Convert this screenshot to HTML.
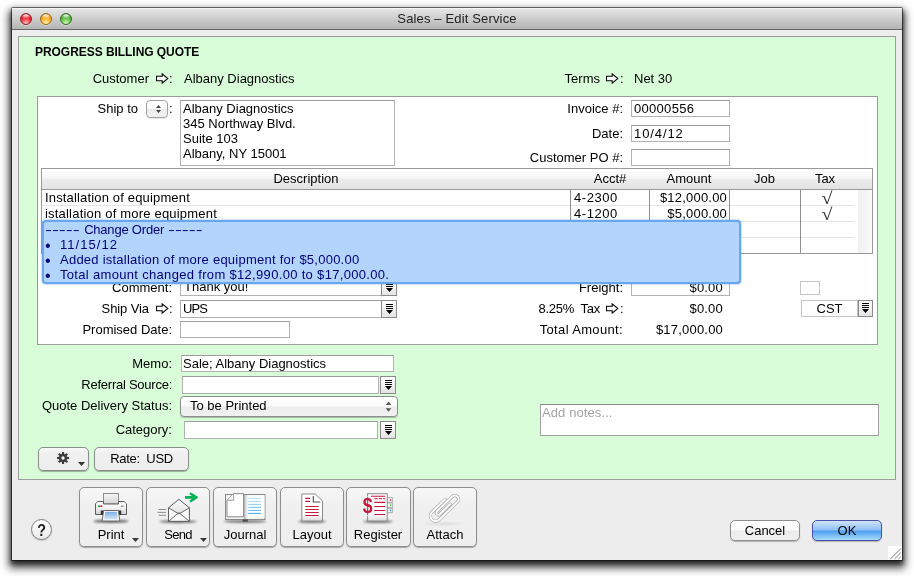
<!DOCTYPE html>
<html>
<head>
<meta charset="utf-8">
<title>Sales – Edit Service</title>
<style>
html,body{margin:0;padding:0;}
body{width:914px;height:576px;background:#fff;position:relative;overflow:hidden;
 font-family:"Liberation Sans",sans-serif;font-size:13px;color:#000;}
.abs,#win *{position:absolute;box-sizing:border-box;}
#win{position:absolute;left:11px;top:7px;width:892px;height:553px;will-change:transform;}
#frame{left:1px;top:1px;width:890px;height:552px;background:#ededed;border-radius:1px 1px 0 0;
 box-shadow:0 0 0 1px rgba(0,0,0,.5),0 5px 8px 3px rgba(0,0,0,.7),0 3px 4px 1px rgba(0,0,0,.5);}
#tbar{left:1px;top:1px;width:890px;height:22px;border-radius:1px 1px 0 0;
 background:linear-gradient(#e8e8e8,#d0d0d0 45%,#b4b4b4);border-bottom:1px solid #666;
 box-shadow:inset 0 1px 0 #f6f6f6;}
#ttl{left:0;top:3px;width:892px;text-align:center;line-height:16px;color:#222;letter-spacing:.15px;}
.tl{width:12px;height:12px;border-radius:50%;top:6px;box-shadow:0 1px 0 rgba(255,255,255,.45);}
.t{line-height:16px;white-space:nowrap;margin-top:1px;}
.ar{width:13px;height:12px;}
.pp{color:#00007a;}
.ck{font-family:'Liberation Serif',serif;font-size:17px;line-height:20px;width:20px;text-align:center;color:#2a2a2a;transform:scaleX(1.18);}
#win span{position:static;}
#win svg *{position:static;}
#win .ds{display:inline-block;width:35.5px;transform:scaleX(1.6);transform-origin:0 50%;}
.r{text-align:right;}
.fld{background:#fff;border:1px solid #b2b2b2;border-top-color:#9c9c9c;}
.dd{width:16px;background:linear-gradient(#fff,#e4e4e4);border:1px solid #8a8a8a;}
#green{left:7px;top:29px;width:878px;height:444px;background:#d8fdd8;border:1px solid #9c9c9c;}
#white{left:26px;top:89px;width:841px;height:249px;background:#fff;border:1px solid #9a9a9a;}
.btn{background:linear-gradient(#fff,#fafafa 48%,#ececec 52%,#f1f1f1);border:1px solid #8d8d8d;border-radius:4px;
 box-shadow:0 1px 1px rgba(0,0,0,.25);}
.gbtn{background:linear-gradient(#f8f8f8,#f0f0f0 25%,#eeeeee);border:1px solid #8c8f8c;border-radius:5px;box-shadow:0 1px 1px rgba(0,0,0,.3);}
.tb{width:64px;height:60px;top:480px;background:linear-gradient(#f7f7f7,#f0f0f0 30%,#eeeeee);border:1px solid #8e8e8e;border-radius:5px;
 box-shadow:0 1px 1px rgba(0,0,0,.3);}
.tb .t{left:0;width:62px;text-align:center;top:38px;}
</style>
</head>
<body>
<div id="win">
 <div id="frame"></div>
 <div id="tbar"></div>
 <div class="tl" style="left:9px;background:radial-gradient(ellipse 55% 30% at 50% 14%,rgba(255,255,255,.95),rgba(255,255,255,0)),radial-gradient(circle at 50% 92%,#ffc4c4 0%,#fa3a46 45%,#d81a2a 75%,#9c1420 100%);border:1px solid #8e1f26"></div>
 <div class="tl" style="left:29px;background:radial-gradient(ellipse 55% 30% at 50% 14%,rgba(255,255,255,.95),rgba(255,255,255,0)),radial-gradient(circle at 50% 92%,#fff2b0 0%,#fdb838 45%,#ee9410 75%,#b06a08 100%);border:1px solid #9a6410"></div>
 <div class="tl" style="left:49px;background:radial-gradient(ellipse 55% 30% at 50% 14%,rgba(255,255,255,.95),rgba(255,255,255,0)),radial-gradient(circle at 50% 92%,#d4f8b8 0%,#6cc850 45%,#3fa52c 75%,#257018 100%);border:1px solid #2f6a22"></div>
 <div id="ttl" class="t">Sales – Edit Service</div>

 <div id="green"></div>
 <div class="t" style="left:24px;top:36px;font-weight:bold;font-size:12px;letter-spacing:-.05px">PROGRESS BILLING QUOTE</div>
 <div class="t r" style="left:50px;width:88px;top:63px">Customer</div>
 <svg class="ar" style="left:145px;top:66px" viewBox="0 0 13 12"><path d="M0.5 3.2H6.2V0.9L11.8 5.5L6.2 10.1V7.8H0.5Z" fill="#fff" stroke="#000" stroke-width="1.1" stroke-linejoin="miter"/></svg>
 <div class="t" style="left:158px;top:63px">:</div>
 <div class="t" style="left:173px;top:63px">Albany Diagnostics</div>
 <div class="t r" style="left:520px;width:69px;top:63px">Terms</div>
 <svg class="ar" style="left:595px;top:66px" viewBox="0 0 13 12"><path d="M0.5 3.2H6.2V0.9L11.8 5.5L6.2 10.1V7.8H0.5Z" fill="#fff" stroke="#000" stroke-width="1.1" stroke-linejoin="miter"/></svg>
 <div class="t" style="left:609px;top:63px">:</div>
 <div class="t" style="left:623px;top:63px">Net 30</div>

 <div id="white"></div>
 <!-- ship to -->
 <div class="t r" style="left:60px;width:67px;top:93px">Ship to</div>
 <div class="btn" style="left:135px;top:93px;width:22px;height:18px;border-radius:4px;border-color:#a2a2a2;box-shadow:0 1px 0 rgba(0,0,0,.08)"></div>
 <svg style="left:144px;top:97px;width:7px;height:10px" viewBox="0 0 7 10"><path d="M1 3.9L3.5 .9L6 3.9ZM1 6.1L3.5 9.1L6 6.1Z" fill="#444"/></svg>
 <div class="t" style="left:158px;top:93px">:</div>
 <div class="fld" style="left:169px;top:93px;width:215px;height:66px"></div>
 <div class="t" style="left:172px;top:93px;line-height:15px">Albany Diagnostics<br>345 Northway Blvd.<br>Suite 103<br>Albany, NY 15001</div>

 <div class="t r" style="left:500px;width:112px;top:93px">Invoice #:</div>
 <div class="fld" style="left:620px;top:93px;width:99px;height:17px"></div>
 <div class="t" style="left:623px;top:93px;letter-spacing:.3px">00000556</div>
 <div class="t r" style="left:500px;width:112px;top:118px">Date:</div>
 <div class="fld" style="left:620px;top:118px;width:99px;height:17px"></div>
 <div class="t" style="left:623px;top:118px;letter-spacing:.9px">10/4/12</div>
 <div class="t r" style="left:500px;width:112px;top:142px">Customer PO #:</div>
 <div class="fld" style="left:620px;top:142px;width:99px;height:17px"></div>

 <!-- table -->
 <div id="tbl" style="left:30px;top:161px;width:832px;height:86px;background:#fff;border:1px solid #9a9a9a"></div>
 <div style="left:31px;top:162px;width:830px;height:21px;background:linear-gradient(#fff,#f6f6f6 45%,#ececec 52%,#e3e3e3);border-bottom:1px solid #9a9a9a"></div>
 <div class="t" style="left:31px;width:528px;text-align:center;top:163px">Description</div>
 <div class="t" style="left:560px;width:78px;text-align:center;top:163px">Acct#</div>
 <div class="t" style="left:638px;width:80px;text-align:center;top:163px">Amount</div>
 <div class="t" style="left:718px;width:71px;text-align:center;top:163px">Job</div>
 <div class="t" style="left:789px;width:50px;text-align:center;top:163px">Tax</div>
 <!-- row lines -->
 <div style="left:31px;top:198px;width:812px;height:1px;background:#e4e4e4"></div>
 <div style="left:31px;top:214px;width:812px;height:1px;background:#e4e4e4"></div>
 <div style="left:31px;top:230px;width:812px;height:1px;background:#e4e4e4"></div>
 <!-- col lines -->
 <div style="left:559px;top:183px;width:1px;height:63px;background:#8f8f8f"></div>
 <div style="left:638px;top:183px;width:1px;height:63px;background:#8f8f8f"></div>
 <div style="left:718px;top:183px;width:1px;height:63px;background:#8f8f8f"></div>
 <div style="left:789px;top:183px;width:1px;height:63px;background:#8f8f8f"></div>
 <div style="left:847px;top:183px;width:14px;height:63px;background:linear-gradient(90deg,#f0f0f0,#fafafa)"></div>
 <div class="t" style="left:34px;top:182px;letter-spacing:.16px">Installation of equipment</div>
 <div class="t" style="left:34px;top:198px;letter-spacing:.2px">istallation of more equipment</div>
 <div class="t" style="left:563px;top:182px;letter-spacing:.55px">4-2300</div>
 <div class="t" style="left:563px;top:198px;letter-spacing:.55px">4-1200</div>
 <div class="t r" style="left:640px;width:76px;top:182px;letter-spacing:.2px">$12,000.00</div>
 <div class="t r" style="left:640px;width:76px;top:198px;letter-spacing:.2px">$5,000.00</div>
 <div class="t ck" style="left:806px;top:181px">√</div>
 <div class="t ck" style="left:806px;top:197px">√</div>

 <!-- below table, left -->
 <div class="t r" style="left:40px;width:121px;top:272px">Comment:</div>
 <div class="fld" style="left:169px;top:272px;width:202px;height:17px"></div>
 <div class="t" style="left:173px;top:271px">Thank you!</div>
 <div class="dd" style="left:370px;top:272px;height:17px"><svg style="left:4px;top:2px;width:7px;height:10px" viewBox="0 0 7 10"><path d="M0 0h7v1H0zM0 2h7v1H0zM0 4h7v1H0zM0 6h7L3.5 10z" fill="#000"/></svg></div>
 <div class="t r" style="left:60px;width:78px;top:293px;letter-spacing:-.1px">Ship Via</div>
 <svg class="ar" style="left:145px;top:296px" viewBox="0 0 13 12"><path d="M0.5 3.2H6.2V0.9L11.8 5.5L6.2 10.1V7.8H0.5Z" fill="#fff" stroke="#000" stroke-width="1.1" stroke-linejoin="miter"/></svg>
 <div class="t" style="left:158px;top:293px">:</div>
 <div class="fld" style="left:169px;top:293px;width:202px;height:18px"></div>
 <div class="t" style="left:172px;top:293px;letter-spacing:-.9px">UPS</div>
 <div class="dd" style="left:370px;top:293px;height:18px"><svg style="left:4px;top:3px;width:7px;height:10px" viewBox="0 0 7 10"><path d="M0 0h7v1H0zM0 2h7v1H0zM0 4h7v1H0zM0 6h7L3.5 10z" fill="#000"/></svg></div>
 <div class="t r" style="left:40px;width:121px;top:314px">Promised Date:</div>
 <div class="fld" style="left:169px;top:314px;width:110px;height:17px"></div>

 <!-- below table, right -->
 <div class="t r" style="left:500px;width:112px;top:272px">Freight:</div>
 <div class="fld" style="left:620px;top:272px;width:99px;height:17px"></div>
 <div class="t r" style="left:636px;width:76px;top:272px;letter-spacing:.2px">$0.00</div>
 <div class="fld" style="left:789px;top:274px;width:20px;height:14px;border-color:#c4c4c4"></div>
 <div class="t r" style="left:500px;width:89px;top:293px;letter-spacing:-.25px">8.25%&nbsp; Tax</div>
 <svg class="ar" style="left:595px;top:296px" viewBox="0 0 13 12"><path d="M0.5 3.2H6.2V0.9L11.8 5.5L6.2 10.1V7.8H0.5Z" fill="#fff" stroke="#000" stroke-width="1.1" stroke-linejoin="miter"/></svg>
 <div class="t" style="left:609px;top:293px">:</div>
 <div class="t r" style="left:636px;width:76px;top:293px;letter-spacing:.2px">$0.00</div>
 <div class="fld" style="left:790px;top:293px;width:57px;height:17px;border-color:#c4c4c4"></div>
 <div class="t" style="left:790px;width:57px;text-align:center;top:293px">CST</div>
 <div class="dd" style="left:847px;top:293px;height:17px;width:15px"><svg style="left:3px;top:2px;width:7px;height:10px" viewBox="0 0 7 10"><path d="M0 0h7v1H0zM0 2h7v1H0zM0 4h7v1H0zM0 6h7L3.5 10z" fill="#000"/></svg></div>
 <div class="t r" style="left:480px;width:132px;top:314px;letter-spacing:.35px">Total Amount:</div>
 <div class="t r" style="left:620px;width:92px;top:314px;letter-spacing:.2px">$17,000.00</div>

 <!-- popup -->
 <div style="left:31px;top:213px;width:699px;height:64px;background:#b3d5fd;border:2px solid #69a6ec;border-radius:4px;box-shadow:0 0 2px rgba(80,150,230,.9)"></div>
 <div class="t pp" style="left:34px;top:214px"><span class="ds">-----</span>&nbsp;<span style="letter-spacing:-.2px">Change Order</span>&nbsp;<span class="ds">-----</span></div>
 <div class="t pp" style="left:34px;top:230px;font-size:16px">•</div><div class="t pp" style="left:49px;top:229px;letter-spacing:1.04px">11/15/12</div>
 <div class="t pp" style="left:34px;top:245px;font-size:16px">•</div><div class="t pp" style="left:49px;top:244px;letter-spacing:.24px">Added istallation of more equipment for $5,000.00</div>
 <div class="t pp" style="left:34px;top:260px;font-size:16px">•</div><div class="t pp" style="left:49px;top:259px;letter-spacing:.32px">Total amount changed from $12,990.00 to $17,000.00.</div>

 <!-- lower form -->
 <div class="t r" style="left:40px;width:121px;top:348px">Memo:</div>
 <div class="fld" style="left:170px;top:348px;width:213px;height:17px"></div>
 <div class="t" style="left:172px;top:348px">Sale; Albany Diagnostics</div>
 <div class="t r" style="left:40px;width:121px;top:369px;letter-spacing:-.25px">Referral Source:</div>
 <div class="fld" style="left:171px;top:369px;width:197px;height:18px"></div>
 <div class="dd" style="left:369px;top:369px;height:18px"><svg style="left:4px;top:3px;width:7px;height:10px" viewBox="0 0 7 10"><path d="M0 0h7v1H0zM0 2h7v1H0zM0 4h7v1H0zM0 6h7L3.5 10z" fill="#000"/></svg></div>
 <div class="t r" style="left:20px;width:141px;top:390px">Quote Delivery Status:</div>
 <div class="btn" style="left:169px;top:389px;width:218px;height:21px"></div>
 <div class="t" style="left:179px;top:390px">To be Printed</div>
 <svg style="left:374px;top:394px;width:7px;height:11px" viewBox="0 0 7 11"><path d="M.7 4L3.5 .5L6.3 4ZM.7 7.2L3.5 10.7L6.3 7.2Z" fill="#555"/></svg>
 <div class="t r" style="left:40px;width:121px;top:414px">Category:</div>
 <div class="fld" style="left:173px;top:414px;width:194px;height:18px"></div>
 <div class="dd" style="left:369px;top:414px;height:18px"><svg style="left:4px;top:3px;width:7px;height:10px" viewBox="0 0 7 10"><path d="M0 0h7v1H0zM0 2h7v1H0zM0 4h7v1H0zM0 6h7L3.5 10z" fill="#000"/></svg></div>

 <div class="gbtn" style="left:27px;top:440px;width:51px;height:24px"></div>
 <svg style="left:46px;top:445px;width:12px;height:12px" viewBox="-6 -6 12 12"><g fill="#3c3c3c"><circle r="4"/><rect x="-1.1" y="-6" width="2.2" height="12"/><rect x="-1.1" y="-6" width="2.2" height="12" transform="rotate(45)"/><rect x="-1.1" y="-6" width="2.2" height="12" transform="rotate(90)"/><rect x="-1.1" y="-6" width="2.2" height="12" transform="rotate(135)"/></g><circle r="1.7" fill="#f6f6f6"/></svg>
 <svg style="left:67px;top:455px;width:7px;height:4px" viewBox="0 0 7 4"><path d="M0 0H7L3.5 4Z" fill="#333"/></svg>
 <div class="gbtn" style="left:83px;top:440px;width:95px;height:24px"></div>
 <div class="t" style="left:83px;width:95px;text-align:center;top:443px;letter-spacing:-.3px">Rate:&nbsp; USD</div>

 <div class="fld" style="left:529px;top:397px;width:339px;height:32px;border-color:#a0a0a0;border-top-color:#8c8c8c"></div>
 <div class="t" style="left:531px;top:397px;color:#a3a3a3;letter-spacing:.1px">Add notes...</div>

 <!-- bottom bar -->
 <div style="left:20px;top:512px;width:21px;height:21px;border-radius:50%;background:linear-gradient(#fff,#ececec);border:1px solid #7d7d7d;box-shadow:0 1px 1px rgba(0,0,0,.2)"></div>
 <div class="t" style="left:20px;width:21px;text-align:center;top:515px;font-weight:bold;font-size:17px;transform:scaleX(.84);color:#222">?</div>

 <div class="tb" style="left:68px"><div class="t" style="left:0px">Print</div><svg style="left:52px;top:50px;width:7px;height:4px" viewBox="0 0 7 4"><path d="M0 0H7L3.5 4Z" fill="#3a3a3a"/></svg></div>
 <div class="tb" style="left:135px"><div class="t" style="left:0px;letter-spacing:-.7px">Send</div><svg style="left:53px;top:50px;width:7px;height:4px" viewBox="0 0 7 4"><path d="M0 0H7L3.5 4Z" fill="#3a3a3a"/></svg></div>
 <div class="tb" style="left:202px"><div class="t">Journal</div></div>
 <div class="tb" style="left:269px"><div class="t">Layout</div></div>
 <div class="tb" style="left:335px;width:65px"><div class="t">Register</div></div>
 <div class="tb" style="left:402px"><div class="t">Attach</div></div>

 <svg id="icons" style="left:0;top:0;width:892px;height:553px" viewBox="11 7 892 553">
  <defs>
   <linearGradient id="gPap" x1="0" y1="0" x2="0" y2="1"><stop offset="0" stop-color="#f6f6f6"/><stop offset="1" stop-color="#d4d4d4"/></linearGradient>
   <linearGradient id="gBody" x1="0" y1="0" x2="0" y2="1"><stop offset="0" stop-color="#ffffff"/><stop offset=".45" stop-color="#f4f4f4"/><stop offset="1" stop-color="#cfcfcf"/></linearGradient>
   <linearGradient id="gBlue" x1="0" y1="0" x2="0" y2="1"><stop offset="0" stop-color="#7aaee6"/><stop offset="1" stop-color="#d6e8fa"/></linearGradient>
   <linearGradient id="gDoc" x1="0" y1="0" x2="0" y2="1"><stop offset="0" stop-color="#ffffff"/><stop offset=".75" stop-color="#ffffff"/><stop offset="1" stop-color="#d9d9d9"/></linearGradient>
   <linearGradient id="gFlap" x1="0" y1="0" x2="0" y2="1"><stop offset="0" stop-color="#ffffff"/><stop offset="1" stop-color="#cfcfcf"/></linearGradient>
   <linearGradient id="gSpine" x1="0" y1="0" x2="1" y2="0"><stop offset="0" stop-color="#ffffff"/><stop offset=".8" stop-color="#d0d0d0"/><stop offset="1" stop-color="#9a9a9a"/></linearGradient>
   <filter id="blur1" x="-20%" y="-200%" width="140%" height="500%"><feGaussianBlur stdDeviation="1.1"/></filter>
  </defs>

  <!-- PRINT -->
  <ellipse cx="111" cy="521.3" rx="17.5" ry="1.7" fill="#000" opacity=".55" filter="url(#blur1)"/>
  <rect x="103.5" y="493.5" width="15" height="10.5" fill="url(#gPap)" stroke="#8c8c8c"/>
  <path d="M95.5 503.8L97.8 501.5H103.5V504H118.5V501.5H124.2L126.5 503.8V514.5H95.5Z" fill="url(#gBody)" stroke="#5c5c5c"/>
  <rect x="98" y="505.3" width="2" height="1.7" fill="#22a83a"/><rect x="100.3" y="505.3" width="2" height="1.7" fill="#e0242a"/>
  <rect x="121" y="505.5" width="2.8" height="1.4" fill="#9a9a9a"/>
  <rect x="100.8" y="510.5" width="20.4" height="4.5" fill="#2e2e2e"/>
  <path d="M103.6 510.5H118.4L119.8 521H102.2Z" fill="#fdfdfd" stroke="#6a6a6a"/>
  <path d="M105.2 511.8H116.8L117.9 519.4H104.1Z" fill="url(#gBlue)"/>

  <!-- SEND -->
  <ellipse cx="178" cy="521.6" rx="19" ry="1.6" fill="#000" opacity=".5" filter="url(#blur1)"/>
  <path d="M168.5 507.8L178.9 499.3L189.4 507.8V521.3H168.5Z" fill="url(#gFlap)" stroke="#5a5a5a" stroke-linejoin="round"/>
  <path d="M168.5 507.8L178.9 514L189.4 507.8V521.3H168.5Z" fill="#fbfbfb" stroke="#5a5a5a" stroke-width=".9" stroke-linejoin="round"/>
  <path d="M168.7 521.2L178.9 512.6L189.2 521.2" fill="none" stroke="#5a5a5a" stroke-width=".9"/>
  <path d="M158.6 509.5H166M157.6 512.4H166M158.6 515.3H166" stroke="#8c8c8c" stroke-width="1" fill="none"/>
  <path d="M185 497.4H194" fill="none" stroke="#0bb157" stroke-width="2.9"/><path d="M190.8 493.8L196.5 497.4L190.8 501" fill="none" stroke="#0bb157" stroke-width="2.5" stroke-linejoin="round" stroke-linecap="round"/>

  <!-- JOURNAL -->
  <ellipse cx="245" cy="521.4" rx="21" ry="1.5" fill="#000" opacity=".5" filter="url(#blur1)"/>
  <rect x="225.5" y="494.5" width="39.5" height="25" fill="#f2f2f2" stroke="#8a8a8a"/>
  <rect x="246" y="495.5" width="18.5" height="22" fill="#ffffff"/>
  <rect x="244" y="495" width="4.5" height="24" fill="url(#gSpine)" transform="translate(492.5 0) scale(-1 1)"/>
  <path d="M227 500.3L233.6 493.6H243.6V516.8H227Z" fill="#fff" stroke="#7e7e7e" stroke-width=".9"/>
  <path d="M227.3 500.3H233.6V493.9" fill="#f4f4f4" stroke="#8a8a8a" stroke-width=".8"/>
  <rect x="242.6" y="519.4" width="5.2" height="2.2" fill="#4a4a4a"/>
  <g stroke-width="1" fill="none"><path d="M248.2 498.4H261" stroke="#b5e0fa"/><path d="M248.2 501.4H261" stroke="#a4d9f9"/><path d="M248.2 504.4H261" stroke="#8ccff8"/><path d="M248.2 507.4H261" stroke="#74c4f6"/><path d="M248.2 510.4H261" stroke="#58b8f4"/><path d="M248.2 513.4H261" stroke="#3aaaf1"/></g>

  <!-- LAYOUT -->
  <ellipse cx="312" cy="521.6" rx="14" ry="1.5" fill="#000" opacity=".5" filter="url(#blur1)"/>
  <path d="M301.8 494H315.3L322.5 501V521H301.8Z" fill="url(#gDoc)" stroke="#8a8a8a" stroke-linejoin="round"/>
  <path d="M313.3 496V502H320.2" fill="none" stroke="#4e4e4e" stroke-width="1.1"/>
  <path d="M305.3 498.4H310M305.3 501.4H310M305.3 506.5H318.7M305.3 509.5H318.7M305.3 512.5H318.7M305.3 515.5H318.7" stroke="#c8173a" stroke-width="1.1" fill="none"/>

  <!-- REGISTER -->
  <ellipse cx="378" cy="521.6" rx="15" ry="1.5" fill="#000" opacity=".5" filter="url(#blur1)"/>
  <path d="M387 497.6H392.4V502.3H387ZM387 502.9H392.4V507.6H387ZM387 508.2H392.4V512.7H387Z" fill="#fafafa" stroke="#9a9a9a" stroke-width=".8"/>
  <rect x="389.9" y="499.2" width="1.3" height="1.6" fill="#d42a3a"/><rect x="389.9" y="504.4" width="1.3" height="1.6" fill="#35b24a"/><rect x="389.9" y="509.6" width="1.3" height="1.6" fill="#2a7fe0"/>
  <rect x="367.6" y="493.7" width="19.6" height="27.3" fill="url(#gDoc)" stroke="#8a8a8a"/>
  <path d="M371 496.3H385.2M374.3 502.4H385.2M374.3 506.5H385.2M374.3 510.5H385.2M374.3 514.5H385.2" stroke="#c8173a" stroke-width="1.1" fill="none"/>
  <path d="M374.3 498.7H385.2" stroke="#c8173a" stroke-width="1" stroke-dasharray="3.4 1" fill="none"/>
  <rect x="362" y="497" width="11" height="18" fill="#f6f6f6" opacity=".0"/>
  <text transform="translate(367.6 513.2) scale(.8 1)" text-anchor="middle" font-family="Liberation Sans, sans-serif" font-weight="bold" font-size="22" fill="#c41637" stroke="#f4f4f4" stroke-width="1.6" paint-order="stroke">$</text>

  <!-- ATTACH -->
  <ellipse cx="443" cy="523.8" rx="19" ry=".8" fill="#000" opacity=".12" filter="url(#blur1)"/>
  <g transform="translate(435.5 515.9) rotate(-44)" fill="none" stroke-linecap="round">
   <path d="M18.5 -5.2H0A5.2 5.2 0 0 0 0 5.2H25.5A3.75 3.75 0 0 0 25.5 -2.3H4.2A2 2 0 0 0 4.2 1.7H18.8" stroke="#969696" stroke-width="3.1"/>
   <path d="M18.5 -5.2H0A5.2 5.2 0 0 0 0 5.2H25.5A3.75 3.75 0 0 0 25.5 -2.3H4.2A2 2 0 0 0 4.2 1.7H18.8" stroke="#fbfbfb" stroke-width="2.1"/>
  </g>
 </svg>
 <svg style="left:877px;top:539px;width:14px;height:14px" viewBox="0 0 14 14"><rect width="14" height="14" fill="#fff"/><path d="M2.4 13L12.9 2.6M6.5 13L12.9 6.7M10.5 13L12.9 10.7" stroke="#7c7c7c" stroke-width="1" fill="none"/></svg>
 <div class="btn" style="left:719px;top:513px;width:70px;height:21px;border-radius:5px"></div>
 <div class="t" style="left:719px;width:70px;text-align:center;top:515px">Cancel</div>
 <div style="left:801px;top:513px;width:70px;height:21px;border-radius:5px;border:1px solid #4a4fa8;background:linear-gradient(#cfe4fb,#8fc0f5 48%,#4c9cef 52%,#a9dcfb);box-shadow:0 1px 1px rgba(0,0,0,.25)"></div>
 <div class="t" style="left:801px;width:70px;text-align:center;top:515px">OK</div>
</div>
</body>
</html>
